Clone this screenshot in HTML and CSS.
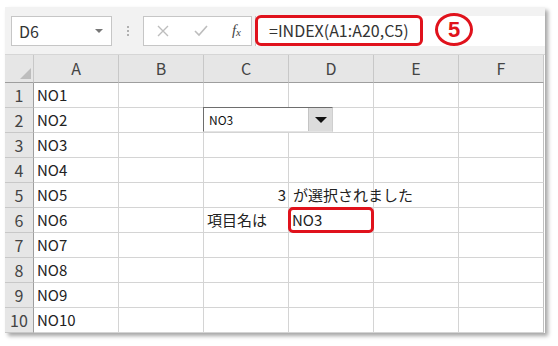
FILE: index.html
```html
<!DOCTYPE html>
<html lang="ja">
<head>
  <meta charset="UTF-8" />
  <title>INDEX</title>
  <link rel="stylesheet" href="styles.css">
</head>
<body>

<div class="frame">

  <!-- Formula bar -->
  <div class="toolbar">
    <div class="namebox">
      <span>D6</span>
      <span class="nb-arrow"></span>
    </div>
    <div class="grip"><i></i><i></i><i></i></div>
    <div class="fbuttons">
      <svg width="14" height="14" viewBox="0 0 14 14"><path d="M2 2 L12 12 M12 2 L2 12" stroke="#bdbdbd" stroke-width="1.4" fill="none"/></svg>
      <svg width="16" height="14" viewBox="0 0 16 14"><path d="M2 7 L6 11 L14 2" stroke="#bdbdbd" stroke-width="1.6" fill="none"/></svg>
      <span class="fx">f<sub>x</sub></span>
    </div>
    <div class="finput">
      <div class="formula">=INDEX(A1:A20,C5)</div>
      <div class="step">5</div>
    </div>
  </div>

  <!-- Sheet -->
  <div class="sheet">
    <div class="hd corner"><span class="tri"></span></div>
    <div class="hd">A</div><div class="hd">B</div><div class="hd">C</div>
    <div class="hd">D</div><div class="hd">E</div><div class="hd">F</div>

    <div class="rh">1</div><div class="c">NO1</div><div class="c"></div><div class="c"></div><div class="c"></div><div class="c"></div><div class="c"></div>
    <div class="rh">2</div><div class="c">NO2</div><div class="c"></div>
    <div class="c dd-cell">
      <div class="dropdown">
        <span class="dd-val">NO3</span>
        <span class="dd-btn"><span class="dd-tri"></span></span>
      </div>
    </div>
    <div class="c"></div><div class="c"></div><div class="c"></div>
    <div class="rh">3</div><div class="c">NO3</div><div class="c"></div><div class="c"></div><div class="c"></div><div class="c"></div><div class="c"></div>
    <div class="rh">4</div><div class="c">NO4</div><div class="c"></div><div class="c"></div><div class="c"></div><div class="c"></div><div class="c"></div>
    <div class="rh">5</div><div class="c">NO5</div><div class="c"></div><div class="c num">3</div><div class="c over">が選択されました</div><div class="c"></div><div class="c"></div>
    <div class="rh">6</div><div class="c">NO6</div><div class="c"></div><div class="c">項目名は</div><div class="c sel">NO3<span class="ring"></span></div><div class="c"></div><div class="c"></div>
    <div class="rh">7</div><div class="c">NO7</div><div class="c"></div><div class="c"></div><div class="c"></div><div class="c"></div><div class="c"></div>
    <div class="rh">8</div><div class="c">NO8</div><div class="c"></div><div class="c"></div><div class="c"></div><div class="c"></div><div class="c"></div>
    <div class="rh">9</div><div class="c">NO9</div><div class="c"></div><div class="c"></div><div class="c"></div><div class="c"></div><div class="c"></div>
    <div class="rh">10</div><div class="c">NO10</div><div class="c"></div><div class="c"></div><div class="c"></div><div class="c"></div><div class="c"></div>
  </div>

</div>

</body>
</html>
```

FILE: styles.css
```css
* { margin: 0; padding: 0; box-sizing: border-box; }
html, body {
  width: 100%;
  height: 100%;
  overflow: hidden;
  background: #fff;
  font-family: "Noto Sans CJK JP", "Noto Sans", sans-serif;
  color: #222;
}

.frame {
  margin: 7px 0 0 5px;
  width: 540px;
  background: #fff;
  box-shadow: 3px 3px 4px rgba(0, 0, 0, 0.35);
}

/* toolbar */
.toolbar {
  height: 48px;
  background: #f2f2f2;
  display: flex;
  align-items: center;
  padding-left: 6px;
  border-bottom: 1px solid #d6d6d6;
}

.namebox {
  width: 101px;
  height: 30px;
  background: #fff;
  border: 1px solid #c6c6c6;
  display: flex;
  align-items: center;
  justify-content: space-between;
  padding: 0 8px 0 7px;
  font-size: 16px;
  color: #333;
}

.nb-arrow {
  width: 0; height: 0;
  border-left: 4px solid transparent;
  border-right: 4px solid transparent;
  border-top: 4px solid #777;
}

.grip {
  width: 31px;
  display: flex;
  flex-direction: column;
  align-items: center;
  gap: 2px;
}
.grip i {
  width: 2px; height: 2px;
  background: #b0b0b0;
}

.fbuttons {
  width: 109px;
  height: 30px;
  background: #fff;
  border: 1px solid #c6c6c6;
  display: flex;
  align-items: center;
  justify-content: space-between;
  padding: 0 10px 0 12px;
}

.fx {
  font-family: "Liberation Serif", serif;
  font-style: italic;
  font-size: 15px;
  color: #444;
}
.fx sub { font-size: 11px; vertical-align: -1px; }

.finput {
  flex: 1;
  height: 30px;
  margin-left: 3px;
  background: #fff;
  border-left: 1px solid #c6c6c6;
  display: flex;
  align-items: center;
  position: relative;
}

.formula {
  width: 168px;
  height: 31px;
  margin-left: -1px;
  margin-top: -1px;
  border: 3px solid #e0121c;
  border-radius: 6px;
  font-size: 16px;
  color: #333;
  padding: 0 0 0 11px;
  line-height: 25px;
}

.step {
  width: 38px;
  height: 33px;
  margin-left: 12px;
  margin-top: -3px;
  border: 3px solid #e0121c;
  border-radius: 50%;
  color: #e0121c;
  font-family: "Liberation Sans", sans-serif;
  font-weight: bold;
  font-size: 22px;
  text-align: center;
  line-height: 27px;
}

/* sheet */
.sheet {
  display: grid;
  grid-template-columns: 29px repeat(6, 85px);
  grid-template-rows: 28px repeat(10, 25px);
  font-size: 15px;
}

.hd {
  background: #e6e6e6;
  border-right: 1px solid #c8c8c8;
  border-bottom: 1px solid #9e9e9e;
  text-align: center;
  line-height: 27px;
  color: #444;
  font-size: 16px;
}
.hd:last-child { border-right: 1px solid #9e9e9e; }

.corner { position: relative; }
.tri {
  position: absolute;
  right: 2px;
  bottom: 3px;
  width: 0; height: 0;
  border-left: 11px solid transparent;
  border-bottom: 11px solid #bdbdbd;
}

.rh {
  background: #e6e6e6;
  border-right: 1px solid #9e9e9e;
  border-bottom: 1px solid #c8c8c8;
  text-align: center;
  line-height: 24px;
  color: #444;
  font-size: 16px;
}

.c {
  border-right: 1px solid #d4d4d4;
  border-bottom: 1px solid #d4d4d4;
  line-height: 24px;
  padding-left: 3px;
  white-space: nowrap;
  position: relative;
}
.c:nth-child(7n) { border-right-color: #c0c0c0; }

.num { text-align: right; padding-right: 2px; }
.over { overflow: visible; padding-left: 4px; }
.sel { padding-left: 3px; }

.ring {
  position: absolute;
  left: -1px;
  top: -1px;
  width: 86px;
  height: 26px;
  border: 3px solid #e0121c;
  border-radius: 5px;
}

.dd-cell { overflow: visible; }
.dropdown {
  position: absolute;
  left: -1px;
  top: -1px;
  width: 130px;
  height: 25px;
  background: #fff;
  border-top: 1px solid #6e6e6e;
  border-left: 1px solid #6e6e6e;
  border-right: 1px solid #cfcfcf;
  border-bottom: 1px solid #e4e4e4;
  display: flex;
  z-index: 2;
}
.dd-val {
  flex: 1;
  font-size: 12px;
  line-height: 23px;
  padding-left: 5px;
  color: #111;
}
.dd-btn {
  width: 24px;
  background: #dcdcdc;
  border-left: 1px solid #c4c4c4;
  display: flex;
  align-items: center;
  justify-content: center;
}
.dd-tri {
  width: 0; height: 0;
  border-left: 6px solid transparent;
  border-right: 6px solid transparent;
  border-top: 6px solid #111;
}
```
